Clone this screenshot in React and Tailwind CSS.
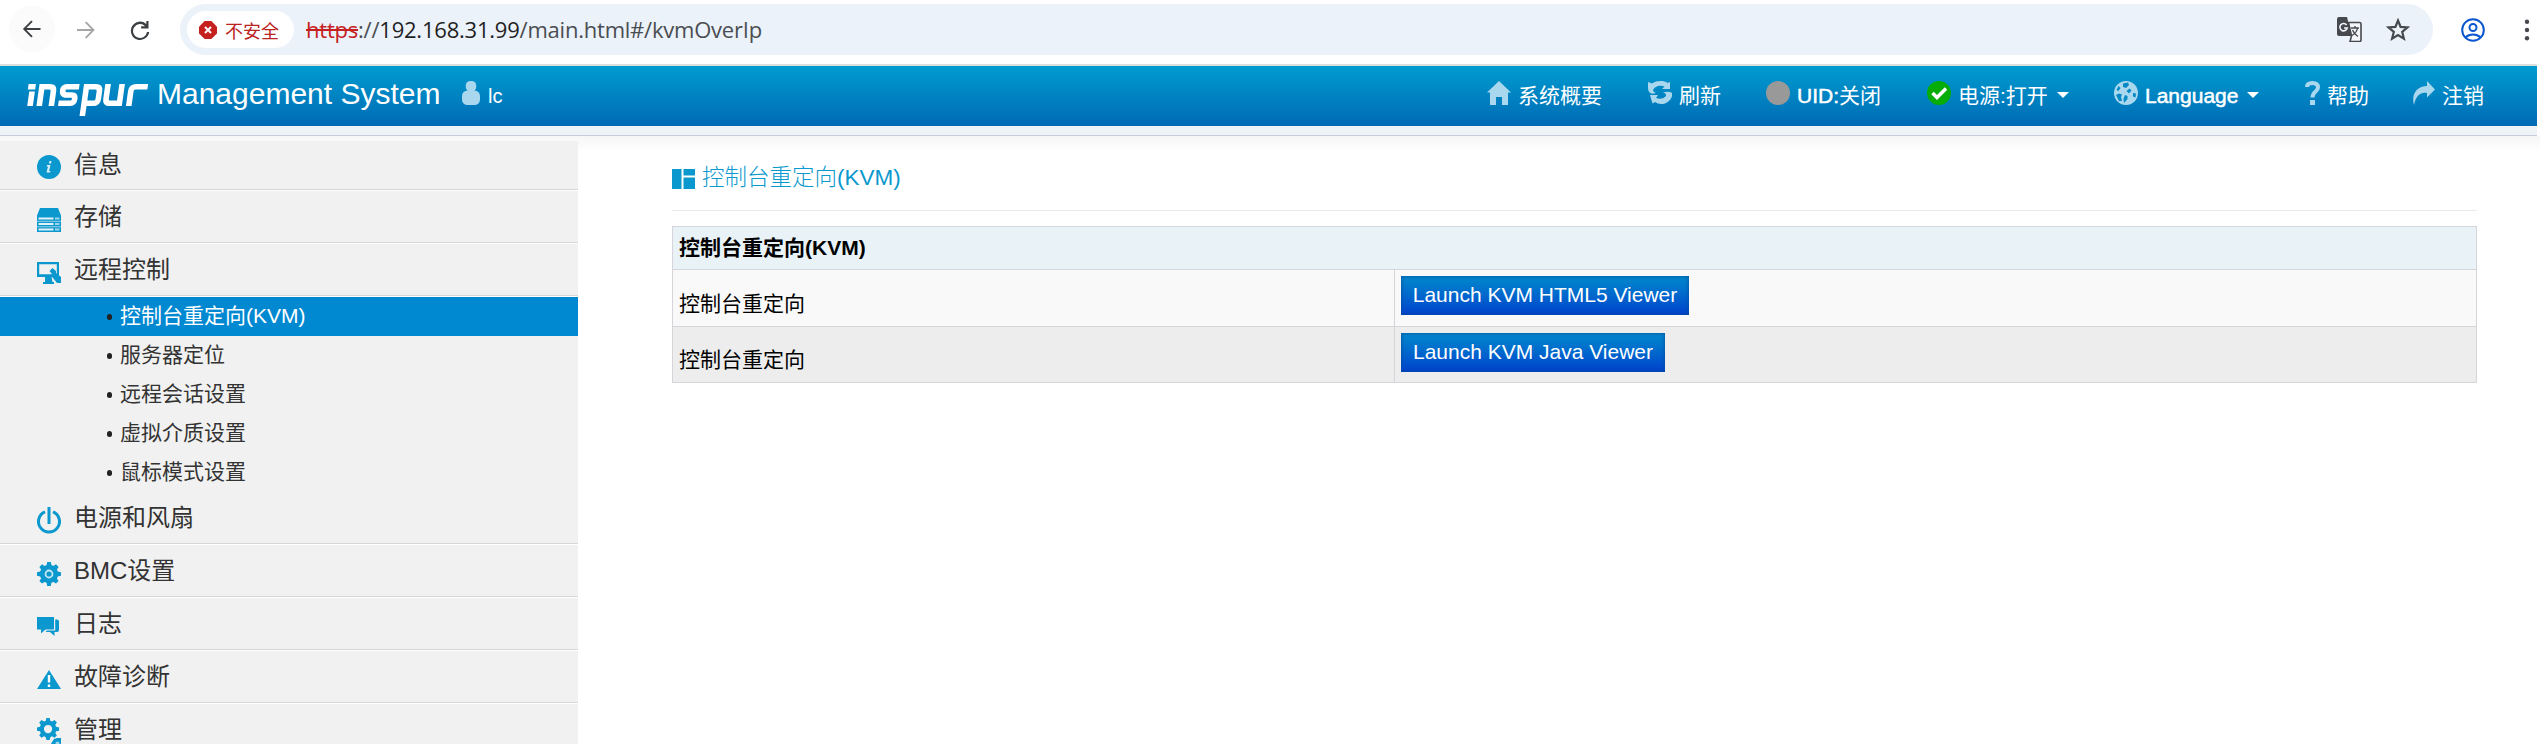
const Svg = ({ className, box = '0 0 24 24', children }) => (
  <svg viewBox={box} className={'block shrink-0 ' + className} fill="currentColor">
    {children}
  </svg>
);

const gear =
  'M10.2 0h3.6l.6 3 2 .9L19 2.300l2.600 2.600-1.700 2.600.9 2 3.200.7v3.600l-3.200.6-.9 2 1.700 2.600-2.600 2.600-2.600-1.700-2 .9-.6 3.200h-3.600l-.6-3.200-2-.9L5 21.600 2.400 19l1.700-2.600-.9-2L0 13.800v-3.600l3.200-.7.9-2L2.400 4.900 5 2.300l2.600 1.600 2-.9z';

function BrowserBar() {
  return (
    <div className="flex h-16 items-start bg-white pt-1 text-[#3c4043]">
      <div className="flex h-[51px] w-[180px] items-center">
        <div className="-mt-px ml-[9px] flex h-[46px] w-[46px] items-center justify-center rounded-full bg-[#fbfbfb]">
          <Svg className="h-6 w-6"><path d="M20.500 11H6.500l6.200-6.200L11.300 3.400 2.900 12l8.400 8.600 1.400-1.400L6.500 13h14z" /></Svg>
        </div>
        <Svg className="ml-[19px] h-6 w-6 text-[#a6a6a6]"><path d="M3 11h14.200L11 4.800l1.400-1.400L20.800 12l-8.400 8.600-1.400-1.400L17.200 13H3z" /></Svg>
        <Svg className="ml-[30px] h-6 w-6"><path d="M20.500 3v7.400h-7.400V8.200h4A7 7 0 1 0 19 14h2.200A9.200 9.200 0 1 1 18.300 6V3z" /></Svg>
      </div>
      <div className="flex h-[51px] w-[2253px] items-center rounded-full bg-[#ebf2fa] pl-[7px]">
        <div className="flex h-[37px] w-[107px] items-center rounded-full bg-white pl-3 text-[#b9221d]">
          <Svg className="h-[18px] w-[18px]">
            <path d="M7.500 0h9L24 7.500v9L16.500 24h-9L0 16.500v-9z" fill="#c5221f" />
            <path d="M8 8l8 8M16 8l-8 8" stroke="#fff" strokeWidth="2.600" />
          </Svg>
          <span className="ml-2 font-['Noto_Sans_CJK_SC',sans-serif] text-[18px] leading-none">不安全</span>
        </div>
        <div className="-mt-[2px] ml-[12px] whitespace-nowrap font-['Open_Sans',sans-serif] text-[22px] leading-none tracking-[-0.010em] text-[#4a4d51]">
          <span className="text-[#c5221f] line-through">https</span>://<span className="text-[#1f1f1f]">192.168.31.99</span>/main.html#/kvmOverIp
        </div>
        <div className="ml-auto mr-[23px] flex items-center gap-[24px]">
          <svg viewBox="0 0 25 25" className="h-[25px] w-[25px]">
            <path d="M2 0h8l4.500 19H2a2 2 0 0 1-2-2V2a2 2 0 0 1 2-2z" fill="#46494d" />
            <path d="M11.500 5.500h11a1.500 1.500 0 0 1 1.500 1.500v16a1.500 1.500 0 0 1-1.500 1.500H13L14.500 19z" fill="#f4f6fa" stroke="#46494d" strokeWidth="1.600" />
            <path d="M9.600 8A3.700 3.700 0 1 0 10.200 11H7" fill="none" stroke="#f4f6fa" strokeWidth="1.600" />
            <path d="M14 11h8M18 9v2M20.500 11c-.5 3.500-3 6-5.500 7.500M15.500 13c1 2.500 3 5 5.500 6.500" fill="none" stroke="#46494d" strokeWidth="1.400" />
          </svg>
          <svg viewBox="0 0 24 24" className="h-[24px] w-[24px]">
            <path d="M12 2.500l2.600 6.400 6.900.5-5.300 4.500 1.700 6.700L12 17l-5.900 3.600 1.700-6.700-5.300-4.500 6.900-.5z" fill="none" stroke="#46494d" strokeWidth="2.200" />
          </svg>
        </div>
      </div>
      <div className="flex h-[51px] items-center pl-[28px]">
        <svg viewBox="0 0 24 24" className="h-6 w-6" fill="none" stroke="#0b57d0" strokeWidth="2">
          <circle cx="12" cy="12" r="10.800" />
          <circle cx="12" cy="9.500" r="3.500" />
          <path d="M4.500 19.500c4-4 11-4 15 0" />
        </svg>
        <svg viewBox="0 0 6 24" className="ml-[39px] h-6 w-[6px]" fill="#46494d">
          <circle cx="3" cy="3.700" r="2.200" />
          <circle cx="3" cy="12" r="2.200" />
          <circle cx="3" cy="20.300" r="2.200" />
        </svg>
      </div>
    </div>
  );
}

const Caret = () => (
  <svg viewBox="0 0 12 6" className="ml-[9px] mt-[3px] h-[6px] w-3 shrink-0" fill="#fff"><path d="M0 0h12L6 6z" /></svg>
);

const Latin = ({ children }) => <span className="[-webkit-text-stroke:0.5px_#fff]">{children}</span>;

function NavItem({ icon, label, caret, width }) {
  return (
    <div className={'flex items-center ' + width}>
      <div className="flex items-center gap-[7px]">
        {icon}
        <span className="mt-[4px] whitespace-nowrap">{label}</span>
      </div>
      {caret && <Caret />}
    </div>
  );
}

function Header() {
  const ic = 'h-6 w-6 text-[#a9d8ee]';
  return (
    <header className="flex h-[62px] w-[2537px] border-t-2 border-[#dcdfdd] bg-linear-to-b from-[#009ccf] to-[#006ab5] text-white">
      <div className="flex h-[54px] w-[1487px] items-center">
        <svg viewBox="0 0 121 34" className="ml-[27px] mt-[11px] h-[34px] w-[121px] overflow-visible" fill="none" stroke="#fff" strokeWidth="5.600">
          <g transform="translate(3.400 0) skewX(-8)">
            <path d="M3 9.500V24" />
            <path d="M-1.500 4.700H5.800" />
            <path d="M12.200 24V4.700H20q4.300 0 4.300 4.300V24" />
            <path d="M49.500 4.700H37q-3.500 0-3.500 3.700T37 13h6q3.700 0 3.700 4T43 21.300H31" />
            <path d="M56.700 34V4.700H66q4.300 0 4.300 4V17q0 4.300-4.300 4.300h-7" />
            <path d="M78 2v15q0 4.300 4.300 4.300H92M92 2v22" />
            <path d="M101.700 24V9q0-4.300 4.300-4.300h12" />
          </g>
        </svg>
        <span className="ml-[9px] mt-[1px] w-[283px] whitespace-nowrap text-[30px] leading-none">Management System</span>
        <Svg className="ml-[22px] h-6 w-[18px] text-[#a9d8ee]" box="0 0 18 24">
          <rect x="3.800" y="0" width="10.400" height="10.500" rx="4.500" />
          <rect x="0" y="9.500" width="18" height="14.500" rx="5.500" />
        </Svg>
        <span className="ml-[8px] mt-[5px] text-[20px] leading-none">lc</span>
      </div>
      <nav className="flex h-[54px] items-center text-[21px] leading-none">
        <NavItem width="w-[161px]" label="系统概要" icon={<Svg className={ic}><path d="M12 0L0 11.500h3V24h6v-8h6v8h6V11.500h3z" /></Svg>} />
        <NavItem width="w-[118px]" label="刷新" icon={
          <Svg className={ic}>
            <path d="M0 1l4 1.500C8-.5 16-.8 19.500 2L22 1v7h-8l2.500-2.500C12 3.500 6 5.500 5 9.500q1 2 3 2.500-3.500 1.500-6 0Q0 10.500 0 7z" />
            <path d="M24 12v3q-1 5-7 7.500-6 1.500-10-1.500l-2.500 1.500L2 14h8l-2 3q6 2 9.500-1.500Q19.500 13 15 11.500q4-1 7-.5z" />
          </Svg>
        } />
        <NavItem width="w-[161px]" label={<><Latin>UID:</Latin>关闭</>} icon={<Svg className="h-6 w-6 text-[#999]"><circle cx="12" cy="12" r="12" /></Svg>} />
        <NavItem width="w-[187px]" caret label="电源:打开" icon={
          <Svg className="h-6 w-6 text-[#06ad06]">
            <circle cx="12" cy="12" r="12" />
            <path d="M5.500 12l4.500 4.500L19 7.500" fill="none" stroke="#fff" strokeWidth="3.500" />
          </Svg>
        } />
        <NavItem width="w-[191px]" caret label={<Latin>Language</Latin>} icon={
          <Svg className={ic}>
            <circle cx="12" cy="12" r="12" />
            <path d="M9 2.500l5-1 1 2.500-3 3-3-1zM2.500 9l2-4 2 2-2 3zM12.500 10l3-2.500 2 2-2.500 3zM19 12l3 .5-.5 4-2.500-1zM2 14l3-1.500 3 1-1 2.500 1 4-3 0zM11 14l2.500 1v3L10 22l-.5-4z" fill="#0489c5" />
          </Svg>
        } />
        <NavItem width="w-[108px]" label="帮助" icon={
          <Svg className="h-6 w-[15px] text-[#a9d8ee]" box="0 0 15 24">
            <path d="M2 6q0-4 5.500-4T13 6.500c0 4-5.500 4-5.500 10" fill="none" stroke="currentColor" strokeWidth="4" />
            <rect x="5" y="19" width="5" height="5" />
          </Svg>
        } />
        <NavItem width="w-[100px]" label="注销" icon={<Svg className="h-6 w-[22px] text-[#a9d8ee]" box="0 0 22 24"><path d="M14 0l8 8.500-8 8V12C7 11 3 15 1 24-2 13 4 5 14 5z" /></Svg>} />
      </nav>
    </header>
  );
}

const blue = 'text-[#0a98ce]';
const icons = {
  info: (
    <Svg className={'h-6 w-6 ' + blue}>
      <circle cx="12" cy="12" r="12" />
      <path d="M12.500 6h2l-.5 2.500h-2zM10 10h3.500L12 16h1.500l-.4 1.500H9.500L11 11.500H9.700z" fill="#d9eef7" />
    </Svg>
  ),
  storage: (
    <Svg className={'h-6 w-6 ' + blue}>
      <path d="M3 0h18l3 7.500V24H0V7.500z" />
      <path d="M1.500 10.500h15M1.500 16h15M1.500 21.500h15" stroke="#e3f2f8" strokeWidth="2.200" />
      <path d="M18 10.500h4.500M18 16h4.500M18 21.500h4.500" stroke="#9fd5ea" strokeWidth="2.200" />
      <path d="M0 13.300h24M0 18.800h24" stroke="#a9d8ea" strokeWidth=".9" />
    </Svg>
  ),
  remote: (
    <Svg className={'h-[22px] w-6 ' + blue} box="0 0 24 22">
      <path fillRule="evenodd" d="M0 0h22v15H0zM2.200 2.200v10h17.600v-10z" />
      <path d="M8 15h6.500l1 5H17v2H6v-2h2z" />
      <path d="M12.500 9l3-3L19 9v2l5 4v6h-4l-4-5-3-2 2-2z" />
    </Svg>
  ),
  power: (
    <Svg className={'h-[27px] w-6 ' + blue} box="0 0 24 27">
      <path d="M8 4.800a10.500 10.500 0 1 0 8 0M12 0v17" fill="none" stroke="currentColor" strokeWidth="3" />
    </Svg>
  ),
  gear: (
    <Svg className={'h-6 w-6 ' + blue}>
      <path d={gear} />
      <circle cx="12" cy="12" r="3.500" fill="none" stroke="#c5e6f2" strokeWidth="1.800" />
    </Svg>
  ),
  log: (
    <Svg className={'h-[19px] w-6 ' + blue} box="0 0 24 19">
      <path d="M0 0h17v12.500H8.500L4 16.500v-4H0z" />
      <path d="M18.200 2.500H20q2 0 2 2V13q0 2-2 2h-2.500v4L13 15H8.500l1.500-1.500h8.200z" />
    </Svg>
  ),
  warn: (
    <Svg className={'h-[19px] w-6 ' + blue} box="0 0 24 19">
      <path d="M12 0l12 19H0z" />
      <path d="M12 5v7.500M12 14.500V17" stroke="#fff" strokeWidth="2.400" />
    </Svg>
  ),
  manage: (
    <Svg className={'h-[32px] w-6 ' + blue} box="0 0 24 32">
      <path fillRule="evenodd" d={gear + 'M12 7.500a4.500 4.500 0 1 0 0 9 4.500 4.500 0 1 0 0-9z'} transform="scale(.92)" />
      <path d="M15 24l2-3 3-1h4v9h-8l-2-3z" />
      <circle cx="20.500" cy="25.500" r="2" fill="#9fd5ea" />
    </Svg>
  ),
};

function MenuItem({ icon, label, height = 'h-[53px]', iconPad = 'pt-[6px]' }) {
  return (
    <div className={'flex shrink-0 flex-col ' + height}>
      <div className="flex grow items-center pl-[37px]">
        <div className={iconPad}>{icons[icon]}</div>
        <span className="ml-[13px] text-[24px] leading-none">{label}</span>
      </div>
      <div className="h-[2px] border-b border-t border-b-white border-t-[#d6d6d6]" />
    </div>
  );
}

function SubItem({ label, active }) {
  return (
    <div className={'flex h-[39px] shrink-0 items-center pb-[2px] pl-[107px] text-[21px] leading-none ' + (active ? 'bg-[#0088d1] text-white' : '')}>
      <span className="mr-[8px] mt-[2px] h-[6px] w-[5px] rounded-full bg-[#222]" />
      {label}
    </div>
  );
}

function Sidebar() {
  return (
    <aside className="mt-[5px] flex h-[603px] w-[578px] flex-col overflow-hidden bg-[#f1f1f1] text-[#333]">
      <MenuItem icon="info" label="信息" height="h-[50px]" iconPad="pt-[3px]" />
      <MenuItem icon="storage" label="存储" />
      <MenuItem icon="remote" label="远程控制" />
      <SubItem label="控制台重定向(KVM)" active />
      <SubItem label="服务器定位" />
      <SubItem label="远程会话设置" />
      <SubItem label="虚拟介质设置" />
      <SubItem label="鼠标模式设置" />
      <MenuItem icon="power" label="电源和风扇" />
      <MenuItem icon="gear" label="BMC设置" />
      <MenuItem icon="log" label="日志" />
      <MenuItem icon="warn" label="故障诊断" />
      <MenuItem icon="manage" label="管理" iconPad="pt-[9px]" />
    </aside>
  );
}

function Row({ label, button, width, className }) {
  return (
    <div className={'flex border-t border-[#d6d6da] ' + className}>
      <div className="flex w-[722px] items-end border-r border-[#d6d6da] pb-[12px] pl-[6px] leading-none">{label}</div>
      <div className="pl-[6px] pt-[6px]">
        <button className={'block h-[39px] whitespace-nowrap bg-linear-to-b from-[#0088cc] to-[#003fcc] pb-[2px] text-[21px] leading-none text-white shadow-[inset_0_0_4px_#004d9a] ' + width}>
          {button}
        </button>
      </div>
    </div>
  );
}

function Main() {
  return (
    <main className="ml-[94px] w-[1805px] text-[21px] text-black">
      <div className="flex h-[75px] items-start border-b border-[#ebebeb] pt-[28px] text-[#0a98ce]">
        <Svg className="mt-[5px] h-[20px] w-[23px]" box="0 0 23 20"><path d="M0 0h9.500v20H0zM11.500 0H23v6.500H11.500zM11.500 8.500H23V20H11.500z" /></Svg>
        <h1 className="ml-[7px] mt-[3px] text-[22.500px] font-light leading-none">控制台重定向(KVM)</h1>
      </div>
      <div className="mt-[15px] border border-[#d6d6da]">
        <div className="flex h-[42px] items-center bg-[#e9f2f6] pb-[2px] pl-[6px] font-bold leading-none">控制台重定向(KVM)</div>
        <Row label="控制台重定向" button="Launch KVM HTML5 Viewer" width="w-[288px]" className="h-[57px] bg-[#f9f9f9]" />
        <Row label="控制台重定向" button="Launch KVM Java Viewer" width="w-[264px]" className="h-[56px] bg-[#ededed]" />
      </div>
    </main>
  );
}

export default function App() {
  return (
    <div className="h-[744px] w-[2540px] overflow-hidden bg-white font-['Liberation_Sans','Noto_Sans_CJK_SC',sans-serif]">
      <BrowserBar />
      <Header />
      <div className="h-[10px] w-[2537px] border-b border-[#c6ccdc] bg-[#eff2f7]" />
      <div className="flex h-[608px] bg-[linear-gradient(to_bottom,#f6f6f6,#ffffff_16px)]">
        <Sidebar />
        <Main />
      </div>
    </div>
  );
}
